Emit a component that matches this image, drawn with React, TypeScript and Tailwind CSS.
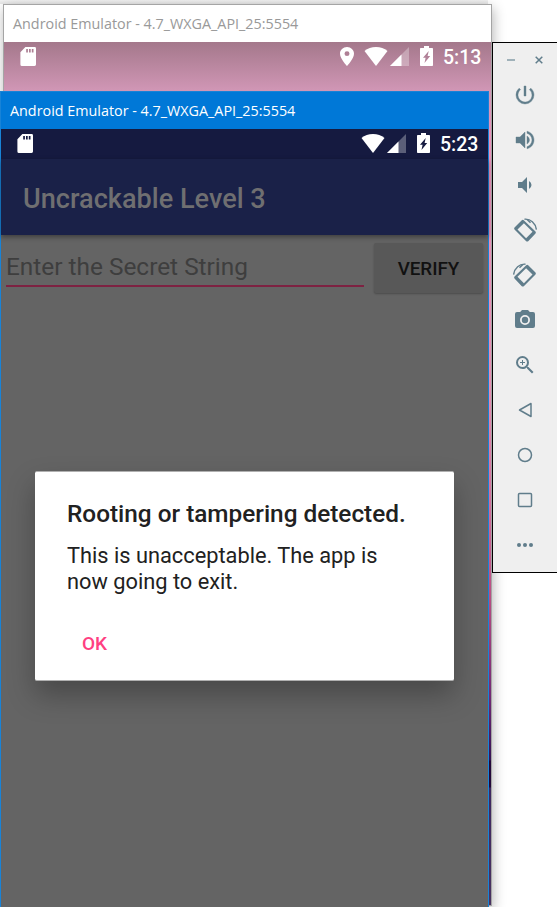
import type { ReactNode } from "react";

const ROBOTO = "font-[Roboto,sans-serif]";
const TITLE = "Android Emulator - 4.7_WXGA_API_25:5554";

function SdCard() {
  return (
    <svg className="block h-[19px] w-4" viewBox="0 0 16 19" fill="#fff">
      <path fillRule="evenodd" d="M5.4 0H14.8Q16 0 16 1.4V17.6Q16 19 14.6 19H1.900Q.4 19 .4 17.4V5.2ZM6.2 2V5.4H7.9V2ZM9 2V5.4H10.7V2ZM11.8 2V5.4H13.5V2Z" />
    </svg>
  );
}

function Pin() {
  return (
    <svg className="block h-[19px] w-[14px]" viewBox="5 2 14 20" preserveAspectRatio="none" fill="#fff">
      <path d="M12 2C8.13 2 5 5.13 5 9c0 5.25 7 13 7 13s7-7.75 7-13c0-3.87-3.13-7-7-7zm0 9.5a2.5 2.5 0 0 1 0-5 2.500 2.500 0 0 1 0 5z" />
    </svg>
  );
}

function Wifi() {
  return (
    <svg className="block h-[19px] w-6" viewBox="0 0 24 19" fill="#fff">
      <path d="M.5 4C3.600 1.400 7.500 0 12 0s8.400 1.400 11.500 4L12 19Z" />
    </svg>
  );
}

function Signal() {
  return (
    <svg className="block h-[19px] w-[19px]" viewBox="0 0 19 19" fill="#fff">
      <path opacity=".3" d="M0 19H19V0Z" />
      <path d="M0 19H11.500V7.500Z" />
    </svg>
  );
}

function Battery() {
  return (
    <svg className="block h-5 w-[13px]" viewBox="0 0 13 20" fill="#fff">
      <path fillRule="evenodd" d="M4 0H9V2H12.200Q13 2 13 2.800V19.200Q13 20 12.200 20H.8Q0 20 0 19.200V2.800Q0 2 .8 2H4ZM8.700 5L3 11.800H5.600L4.500 17L10.200 10H7.600Z" />
    </svg>
  );
}

function StatusBar({ time, pin = false }: { time: string; pin?: boolean }) {
  return (
    <div className={`flex h-[30px] items-start pl-4 pr-[10px] pt-[5px] ${ROBOTO}`}>
      <SdCard />
      <div className="ml-auto flex">
        {pin && <div className="mr-[10px]"><Pin /></div>}
        <Wifi />
        <div className="ml-[2px]"><Signal /></div>
        <div className="-mt-px ml-[11px]"><Battery /></div>
        <span className="ml-[10px] mt-px w-[38px] whitespace-nowrap text-[19.5px] font-medium leading-5 text-white">{time}</span>
      </div>
    </div>
  );
}

function ToolIcon({ children }: { children: ReactNode }) {
  return (
    <div className="flex h-[45px] items-center justify-center">
      <svg className="block h-6 w-6" viewBox="0 0 24 24" fill="#607d8b">{children}</svg>
    </div>
  );
}

function Rotate() {
  return (
    <g transform="translate(0 .6)">
      <path fillRule="evenodd" d="M8.800 1.600Q9.800.8 10.800 1.700L22.500 13Q23.300 14 22.500 15L15.200 22.600Q14.200 23.400 13.200 22.600L1.500 11Q.7 10 1.500 9ZM10.900 4.600L4.500 11L13.100 19.600L19.500 13.200Z" />
      <path d="M11.500 .6C17.500 0 22.500 4.500 23.400 11" fill="none" stroke="#607d8b" strokeWidth="1.400" />
      <path d="M12.500.4l4.500 4.200 1-1-2.300-2.300Z" />
    </g>
  );
}

function Toolbar() {
  return (
    <aside className="absolute left-[492px] top-[42px] h-[531px] w-[67px] border border-black bg-[#efefef]">
      <div className="flex h-[29px] items-end justify-between pb-[7px] pl-[14px] pr-[15px]">
        <svg className="h-[10px] w-2" viewBox="0 0 8 10"><path d="M0 5H8" stroke="#9fb1b9" strokeWidth="2" /></svg>
        <svg className="h-[10px] w-2" viewBox="0 0 8 10"><path d="M.7 1.700L7.300 8.300M7.300 1.700L.7 8.300" stroke="#607d8b" strokeWidth="1.500" /></svg>
      </div>
      <div className="w-16">
        <ToolIcon><path d="M13 3h-2v10h2V3zm4.830 2.170-1.420 1.420A6.920 6.920 0 0 1 19 12a7 7 0 1 1-11.420-5.420L6.170 5.170A8.932 8.932 0 0 0 3 12a9 9 0 0 0 18 0c0-2.740-1.230-5.180-3.170-6.830z" stroke="#607d8b" strokeWidth=".4" /></ToolIcon>
        <ToolIcon><path d="M3 9v6h4l5 5V4L7 9H3zm13.500 3A4.500 4.500 0 0 0 14 7.970v8.050A4.470 4.470 0 0 0 16.500 12zM14 3.230v2.060c2.890.86 5 3.540 5 6.710s-2.110 5.850-5 6.710v2.060c4.010-.91 7-4.490 7-8.770s-2.990-7.860-7-8.770z" stroke="#607d8b" strokeWidth=".4" /></ToolIcon>
        <ToolIcon><path d="M18.500 12A4.500 4.500 0 0 0 16 7.970v8.050A4.470 4.470 0 0 0 18.500 12zM5 9v6h4l5 5V4L9 9H5z" /></ToolIcon>
        <ToolIcon><Rotate /></ToolIcon>
        <ToolIcon><g transform="translate(24 0) scale(-1 1)"><Rotate /></g></ToolIcon>
        <ToolIcon><path fillRule="evenodd" d="M9 2 7.170 4H4a2 2 0 0 0-2 2v12a2 2 0 0 0 2 2h16a2 2 0 0 0 2-2V6a2 2 0 0 0-2-2h-3.170L15 2H9zm3 15a5 5 0 1 1 0-10 5 5 0 0 1 0 10zm0-1.800a3.200 3.200 0 1 0 0-6.400 3.200 3.200 0 0 0 0 6.400z" /></ToolIcon>
        <ToolIcon><path d="M15.500 14h-.79l-.28-.27A6.471 6.471 0 0 0 16 9.500 6.500 6.500 0 1 0 9.500 16c1.610 0 3.090-.59 4.230-1.570l.27.28v.79l5 4.990L20.490 19l-4.990-5zm-6 0a4.500 4.500 0 1 1 0-9 4.500 4.500 0 0 1 0 9zm2.500-4h-2v2H9v-2H7V9h2V7h1v2h2v1z" /></ToolIcon>
        <ToolIcon><path d="M6.500 12L18 5.500V18.500Z" fill="none" stroke="#607d8b" strokeWidth="1.500" strokeLinejoin="round" /></ToolIcon>
        <ToolIcon><circle cx="12" cy="12" r="6.500" fill="none" stroke="#607d8b" strokeWidth="1.500" /></ToolIcon>
        <ToolIcon><rect x="5.500" y="5.500" width="13" height="13" rx="1" fill="none" stroke="#607d8b" strokeWidth="1.500" /></ToolIcon>
        <ToolIcon><circle cx="6" cy="12" r="2" /><circle cx="12" cy="12" r="2" /><circle cx="18" cy="12" r="2" /></ToolIcon>
      </div>
    </aside>
  );
}

function Dialog() {
  return (
    <div className="absolute left-[34px] top-[342px] h-[210px] w-[419px] rounded-[2px] border-y border-[#b0b0b0] bg-white pl-8 pt-[27px] text-[#212121] shadow-[0_14px_28px_rgba(0,0,0,0.28)]">
      <h2 className="whitespace-nowrap text-[24.35px] font-medium leading-[30px]">Rooting or tampering detected.</h2>
      <p className="mt-[14px] whitespace-nowrap text-[21.8px] leading-[26px]">This is unacceptable. The app is<br />now going to exit.</p>
      <button className="ml-[15px] mt-[37px] block text-[19px] font-medium leading-6 text-[#ff4081]">OK</button>
    </div>
  );
}

export default function App() {
  return (
    <main className="relative h-[907px] w-[557px] overflow-hidden bg-white">
      <div className="h-1 w-[488px] bg-linear-to-b from-[#f2f2f2] to-[#e6e6e6]" />
      <section className="absolute left-[3px] top-1 h-[902px] w-[489px] border border-[#a5a5a5] bg-[linear-gradient(to_bottom,#a4788b_37px,#d096b5_85px,#e990bb_130px,#e68db2_380px,#d16d9b_500px,#ba4f83_590px,#722a75_690px,#351354_755px,#230839_756px,#230839_782px,#3e2860_783px,#493260_900px)] shadow-[1px_4px_12px_rgba(0,0,0,0.3)]">
        <div className="flex h-[37px] items-center bg-white pl-[9px] font-['Open_Sans',sans-serif] text-[14.35px] text-[#999]">
          <span className="whitespace-nowrap">{TITLE}</span>
        </div>
        <StatusBar time="5:13" pin />
      </section>
      <Toolbar />
      <section className="absolute left-0 top-[91px] h-[817px] w-[489px] border border-[#1883d7] bg-[#646464]">
        <header className="-mt-px flex h-[38px] items-center border-t border-[#1883d7] bg-[#0078d7] pl-[9px] font-['Open_Sans',sans-serif] text-[14.35px] text-white">
          <span className="whitespace-nowrap">{TITLE}</span>
        </header>
        <div className={`relative h-[778px] ${ROBOTO}`}>
          <div className="bg-[#151a40]"><StatusBar time="5:23" /></div>
          <div className="relative flex h-[76px] items-center bg-[#1a2148] pl-[22px] pt-[5px] shadow-[0_2px_5px_rgba(0,0,0,0.4)]">
            <h1 className="whitespace-nowrap text-[27.1px] font-medium text-[#6f6f71]">Uncrackable Level 3</h1>
          </div>
          <div className="flex pl-[5px] pt-2">
            <div className="h-[44px] w-[358px] border-b-2 border-[#7e2242]">
              <div className="whitespace-nowrap pt-2 text-[24.400px] leading-8 text-[#3e3e3e]">Enter the Secret String</div>
            </div>
            <button className="ml-[10px] h-[50px] w-[109px] rounded-[2px] bg-[#585858] pt-[2px] text-[18.800px] font-medium text-[#111] shadow-[0_1px_2px_rgba(0,0,0,0.25)]">VERIFY</button>
          </div>
          <Dialog />
        </div>
      </section>
    </main>
  );
}
